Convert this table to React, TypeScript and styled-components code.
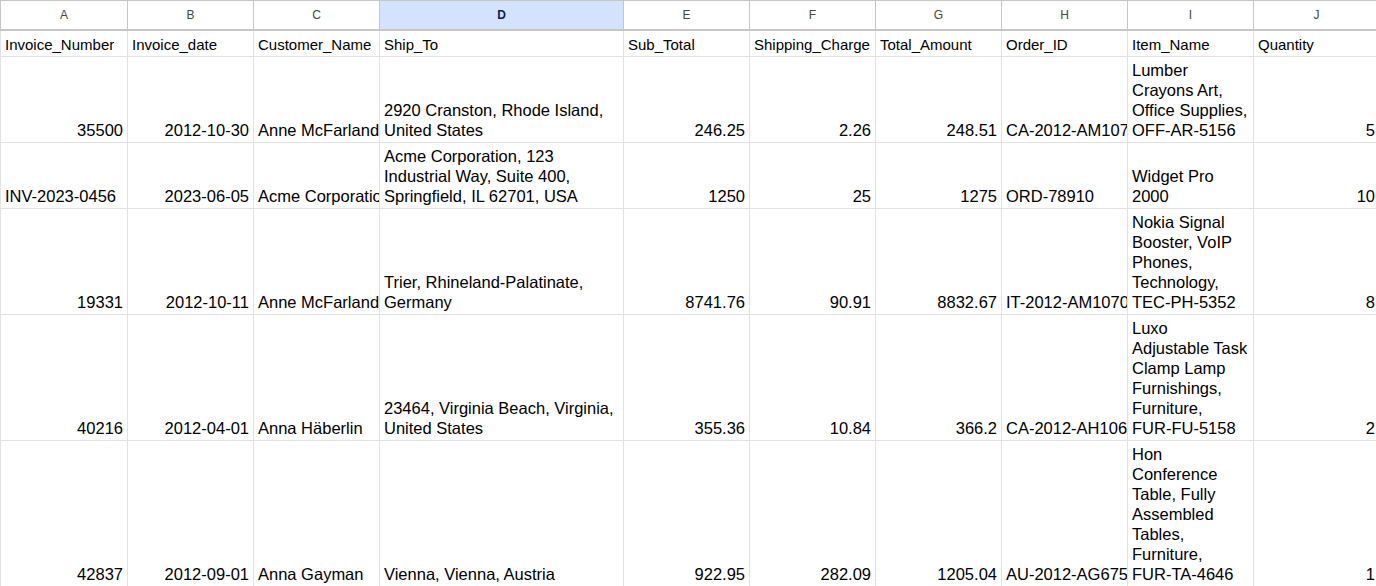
import React from "react";
import styled, { createGlobalStyle, css } from "styled-components";

const GlobalStyle = createGlobalStyle`
  html, body {
    margin: 0;
    padding: 0;
    background: #ffffff;
    overflow: hidden;
  }
  body {
    font-family: "Liberation Sans", Arial, sans-serif;
  }
`;

const COLS = "127px 126px 126px 244px 126px 126px 126px 126px 126px 126px";

const Sheet = styled.div`
  width: 1376px;
  height: 586px;
  overflow: hidden;
  background: #fff;
`;

const Grid = styled.div`
  width: 1379px;
  display: flex;
  flex-direction: column;
`;

const HeaderRow = styled.div`
  display: grid;
  grid-template-columns: ${COLS};
  border-top: 1px solid #c4c7c5;
  border-bottom: 2px solid #c4c7c5;
  border-left: 1px solid #c4c7c5;
`;

const ColHeader = styled.div<{ $selected?: boolean }>`
  height: 28px;
  display: flex;
  align-items: center;
  justify-content: center;
  border-right: 1px solid #c4c7c5;
  font-family: "Liberation Sans", Arial, sans-serif;
  font-size: 12px;
  color: #444746;
  background: #ffffff;
  ${(p) =>
    p.$selected &&
    css`
      background: #d3e3fd;
      color: #0b1f45;
      font-weight: 700;
    `}
`;

const Row = styled.div`
  display: grid;
  grid-template-columns: ${COLS};
  border-left: 1px solid #e1e1e1;
`;

const Cell = styled.div<{ $align?: "left" | "right"; $title?: boolean }>`
  display: flex;
  flex-direction: column;
  justify-content: flex-end;
  padding: ${(p) => (p.$title ? "4px 4px 1px 4px" : "3px 4px 2px 4px")};
  border-right: 1px solid #e1e1e1;
  border-bottom: 1px solid #e1e1e1;
  overflow: hidden;
  white-space: nowrap;
  font-family: "Liberation Sans", Arial, sans-serif;
  font-size: ${(p) => (p.$title ? "15px" : "16.5px")};
  line-height: 20px;
  color: #000;
  text-align: ${(p) => (p.$align === "right" ? "right" : "left")};
  min-width: 0;
`;

const Line = styled.span`
  display: block;
`;

type Val = string | string[];
type RowData = { cells: Val[]; align: ("l" | "r")[]; title?: boolean };

const headers = ["A", "B", "C", "D", "E", "F", "G", "H", "I", "J"];

const rows: RowData[] = [
  {
    title: true,
    cells: [
      "Invoice_Number",
      "Invoice_date",
      "Customer_Name",
      "Ship_To",
      "Sub_Total",
      "Shipping_Charge",
      "Total_Amount",
      "Order_ID",
      "Item_Name",
      "Quantity",
    ],
    align: ["l", "l", "l", "l", "l", "l", "l", "l", "l", "l"],
  },
  {
    cells: [
      "35500",
      "2012-10-30",
      "Anne McFarland",
      ["2920 Cranston, Rhode Island,", "United States"],
      "246.25",
      "2.26",
      "248.51",
      "CA-2012-AM10765140-41213",
      ["Lumber", "Crayons Art,", "Office Supplies,", "OFF-AR-5156"],
      "5",
    ],
    align: ["r", "r", "l", "l", "r", "r", "r", "l", "l", "r"],
  },
  {
    cells: [
      "INV-2023-0456",
      "2023-06-05",
      "Acme Corporation",
      ["Acme Corporation, 123", "Industrial Way, Suite 400,", "Springfield, IL 62701, USA"],
      "1250",
      "25",
      "1275",
      "ORD-78910",
      ["Widget Pro", "2000"],
      "10",
    ],
    align: ["l", "r", "l", "l", "r", "r", "r", "l", "l", "r"],
  },
  {
    cells: [
      "19331",
      "2012-10-11",
      "Anne McFarland",
      ["Trier, Rhineland-Palatinate,", "Germany"],
      "8741.76",
      "90.91",
      "8832.67",
      "IT-2012-AM10705139-41193",
      ["Nokia Signal", "Booster, VoIP", "Phones,", "Technology,", "TEC-PH-5352"],
      "8",
    ],
    align: ["r", "r", "l", "l", "r", "r", "r", "l", "l", "r"],
  },
  {
    cells: [
      "40216",
      "2012-04-01",
      "Anna Häberlin",
      ["23464, Virginia Beach, Virginia,", "United States"],
      "355.36",
      "10.84",
      "366.2",
      "CA-2012-AH10690140-41000",
      ["Luxo", "Adjustable Task", "Clamp Lamp", "Furnishings,", "Furniture,", "FUR-FU-5158"],
      "2",
    ],
    align: ["r", "r", "l", "l", "r", "r", "r", "l", "l", "r"],
  },
  {
    cells: [
      "42837",
      "2012-09-01",
      "Anna Gayman",
      ["Vienna, Vienna, Austria"],
      "922.95",
      "282.09",
      "1205.04",
      "AU-2012-AG6750139-41153",
      ["Hon", "Conference", "Table, Fully", "Assembled", "Tables,", "Furniture,", "FUR-TA-4646"],
      "1",
    ],
    align: ["r", "r", "l", "l", "r", "r", "r", "l", "l", "r"],
  },
];

export default function App() {
  return (
    <>
      <GlobalStyle />
      <Sheet>
        <Grid>
          <HeaderRow>
            {headers.map((h) => (
              <ColHeader key={h} $selected={h === "D"}>
                {h}
              </ColHeader>
            ))}
          </HeaderRow>
          {rows.map((r, ri) => (
            <Row key={ri}>
              {r.cells.map((c, ci) => (
                <Cell
                  key={ci}
                  $title={r.title}
                  $align={r.align[ci] === "r" ? "right" : "left"}
                >
                  {Array.isArray(c) ? c.map((l, li) => <Line key={li}>{l}</Line>) : <Line>{c}</Line>}
                </Cell>
              ))}
            </Row>
          ))}
        </Grid>
      </Sheet>
    </>
  );
}
